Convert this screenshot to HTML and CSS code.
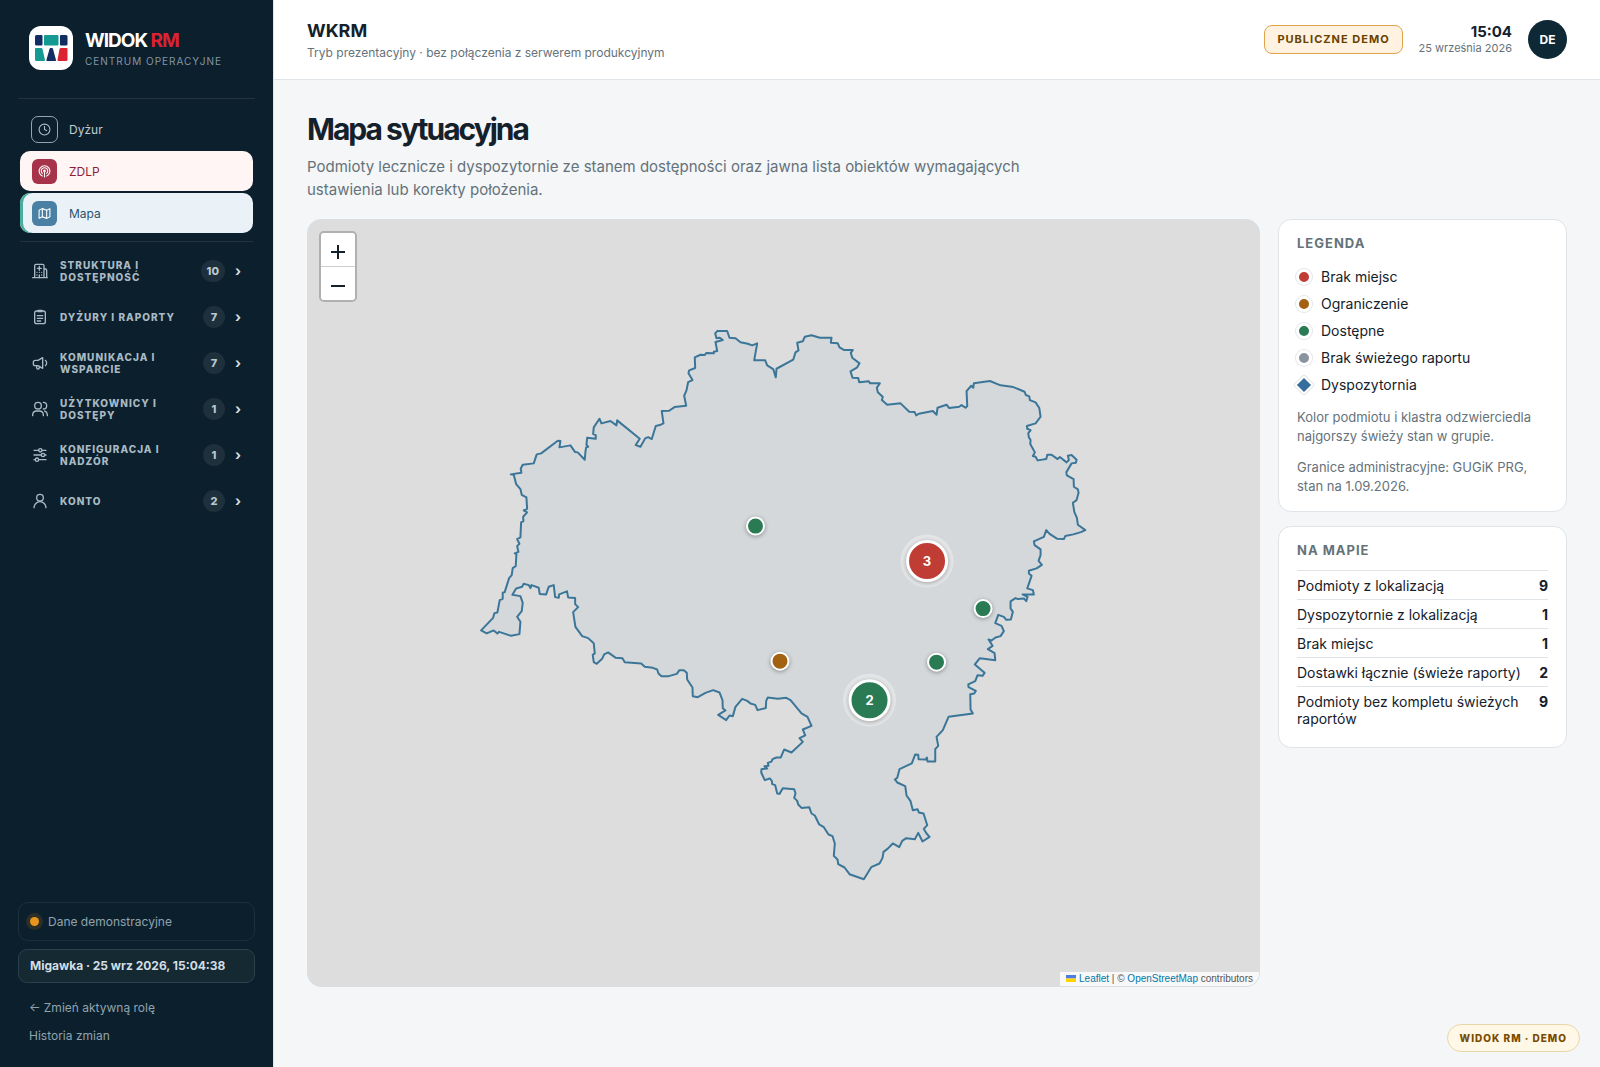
FILE: index.html
```html
<!DOCTYPE html>
<html lang="pl">
<head>
<meta charset="utf-8">
<meta name="viewport" content="width=device-width, initial-scale=1">
<title>Widok RM – Mapa sytuacyjna</title>
<link rel="stylesheet" href="styles.css">
</head>
<body>
<div class="app">
  <aside class="sidebar">
    <div class="brand">
      <svg class="brand-logo" viewBox="0 0 44 44" aria-hidden="true">
        <rect width="44" height="44" rx="12" fill="#fff"/>
        <path d="M7.500 9h5a1 1 0 0 1 1 1v8.500a1 1 0 0 1-1 1h-5a1.500 1.500 0 0 1-1.500-1.500v-7.500a1.500 1.500 0 0 1 1.500-1.500z" fill="#122d63"/>
        <rect x="15" y="9" width="14.500" height="10.500" rx="1" fill="#159a93"/>
        <path d="M32 9h5a1.500 1.500 0 0 1 1.500 1.500v7.500a1.500 1.500 0 0 1-1.500 1.500h-5a1 1 0 0 1-1-1v-8.500a1 1 0 0 1 1-1z" fill="#122d63"/>
        <path d="M7 22h5a1.500 1.500 0 0 1 1.500 1l2.500 11a1 1 0 0 1-1 1h-7.500a1.500 1.500 0 0 1-1.500-1.500v-10.500a1 1 0 0 1 1-1z" fill="#159a93"/>
        <path d="M21.500 22h1.500q.7 0 1 1l3 11q.2 1-.8 1h-8q-1 0-.8-1l3.100-11q.3-1 1-1z" fill="#122d63"/>
        <path d="M32 22h5.500a1 1 0 0 1 1 1v10.500a1.500 1.500 0 0 1-1.500 1.500h-7.500a1 1 0 0 1-1-1l2-11a1.500 1.500 0 0 1 1.500-1z" fill="#dc2231"/>
      </svg>
      <div>
        <div class="brand-name">WIDOK <span>RM</span></div>
        <div class="brand-sub">CENTRUM OPERACYJNE</div>
      </div>
    </div>

    <nav class="nav" aria-label="Główne">
      <a class="nav-link" href="#dyzur">
        <span class="nav-icon outlined"><svg viewBox="0 0 24 24"><circle cx="12" cy="12" r="10"/><path d="M12 6v6l4 2"/></svg></span>Dyżur
      </a>
      <a class="nav-link red" href="#zdlp">
        <span class="nav-icon"><svg viewBox="0 0 24 24"><path d="M16 20.500a10 10 0 1 0-8 0"/><path d="M8 15.500a6 6 0 1 1 8 0"/><circle cx="12" cy="11" r="1.500"/><path d="M12 14v8"/></svg></span>ZDLP
      </a>
      <a class="nav-link blue" href="#mapa" aria-current="page">
        <span class="nav-icon"><svg viewBox="0 0 24 24"><path d="M2 6l6-3 8 3 6-3v15l-6 3-8-3-6 3z"/><path d="M8 3v15M16 6v15"/></svg></span>Mapa
      </a>
    </nav>

    <div class="groups">
      <button class="group" type="button" aria-expanded="false">
        <svg class="group-icon" viewBox="0 0 24 24"><path d="M1 22h22M4 22V4a2 2 0 0 1 2-2h10a2 2 0 0 1 2 2v18M18 9h2a2 2 0 0 1 2 2v11M11 5v6M8 8h6"/><path d="M7.500 14h.01M11 14h.01M14.500 14h.01M7.500 18h.01M14.500 18h.01M11 18v4"/></svg>
        <span class="group-label">STRUKTURA I DOSTĘPNOŚĆ</span><span class="count">10</span><span class="chevron">›</span>
      </button>
      <button class="group" type="button" aria-expanded="false">
        <svg class="group-icon" viewBox="0 0 24 24"><rect x="4" y="3" width="16" height="19" rx="3"/><path d="M9 2h6v2H9zM8 10h8M8 14h8M8 18h5"/></svg>
        <span class="group-label">DYŻURY I RAPORTY</span><span class="count">7</span><span class="chevron">›</span>
      </button>
      <button class="group" type="button" aria-expanded="false">
        <svg class="group-icon" viewBox="0 0 24 24"><path d="M16 4v16L9 16H5a3 3 0 0 1-3-3v-2a3 3 0 0 1 3-3h4zM7 16v3a2 2 0 0 0 4 0v-2M20 8a5 5 0 0 1 0 8"/></svg>
        <span class="group-label">KOMUNIKACJA I WSPARCIE</span><span class="count">7</span><span class="chevron">›</span>
      </button>
      <button class="group" type="button" aria-expanded="false">
        <svg class="group-icon" viewBox="0 0 24 24"><circle cx="9" cy="7" r="5"/><path d="M1 22v-2a6 6 0 0 1 6-5h4a6 6 0 0 1 6 5v2M17 2a5 5 0 0 1 0 10M19 15a6 6 0 0 1 4 5v2"/></svg>
        <span class="group-label">UŻYTKOWNICY I DOSTĘPY</span><span class="count">1</span><span class="chevron">›</span>
      </button>
      <button class="group" type="button" aria-expanded="false">
        <svg class="group-icon" viewBox="0 0 24 24"><path d="M3 5h7M15 5h6M3 12h11M19 12h2M3 19h2M10 19h11"/><circle cx="12.500" cy="5" r="2.500"/><circle cx="16.500" cy="12" r="2.500"/><circle cx="7.500" cy="19" r="2.500"/></svg>
        <span class="group-label">KONFIGURACJA I NADZÓR</span><span class="count">1</span><span class="chevron">›</span>
      </button>
      <button class="group" type="button" aria-expanded="false">
        <svg class="group-icon" viewBox="0 0 24 24"><circle cx="12" cy="7" r="5"/><path d="M3 22a9 9 0 0 1 18 0"/></svg>
        <span class="group-label">KONTO</span><span class="count">2</span><span class="chevron">›</span>
      </button>
    </div>

    <div class="side-foot">
      <div class="data-state"><i></i>Dane demonstracyjne</div>
      <div class="snapshot">Migawka · 25 wrz 2026, 15:04:38</div>
      <a href="#rola">← Zmień aktywną rolę</a>
      <a href="#historia">Historia zmian</a>
    </div>
  </aside>

  <div class="main">
    <header class="topbar">
      <div>
        <div class="org">WKRM</div>
        <div class="org-sub">Tryb prezentacyjny · bez połączenia z serwerem produkcyjnym</div>
      </div>
      <div class="topbar-right">
        <span class="demo-badge">PUBLICZNE DEMO</span>
        <div class="clock">
          <div class="clock-time">15:04</div>
          <div class="clock-date">25 września 2026</div>
        </div>
        <span class="avatar">DE</span>
      </div>
    </header>

    <main class="content">
      <h1>Mapa sytuacyjna</h1>
      <p class="lead">Podmioty lecznicze i dyspozytornie ze stanem dostępności oraz jawna lista obiektów wymagających ustawienia lub korekty położenia.</p>

      <div class="layout">
        <section class="map" aria-label="Mapa">
          <svg class="map-canvas" viewBox="307 220 952 766" preserveAspectRatio="xMidYMid slice">
            <path class="border" d="M480.700 630.300 492.700 617.700 494 613 497 612.300 499.300 600 502.300 598.700 502.300 592.700 504.300 592 508.700 578 511.300 575 512.300 568 515.300 566 516 554 514.300 553.300 518 551.700 516.700 546 519 543.700 516.700 539 520 537.300 520.700 522.300 523 521 522.700 516.700 526.700 512.300 523.300 510.300 526.700 508.700 526 497.300 521.300 494.700 520 489 515.700 484 513.300 474.700 510.300 474.300 521 472.700 520.300 468.700 522.300 464.700 533.300 463.300 536.300 454.300 540.700 453.300 557.300 440.700 560 441 559 447.300 570 445.300 574.700 452 577.300 452.300 584.300 459.700 585 451.700 585.700 447.300 587.700 446.700 586 444.700 586.700 437.700 595.300 438.700 595.300 435 592.700 434 593.300 427.300 599 418.700 601 423.300 610 421 616 425.300 616.700 420.300 639.300 438.700 635.300 445 640 446.700 644.700 438.300 647.700 437 651.300 439 655.300 426 659.300 425 663 423.300 661.300 411 668.700 410.700 674 407 685.700 405.700 683.700 395.700 686 390.300 687.700 382 692 380 688 373.300 688.700 370.300 694.700 368 694.300 357.300 700 354.700 704.300 355 705.700 353 713.300 353.300 713.300 351.700 716.700 351 715 342 722.300 340 719.300 337.700 716 338.300 714.700 333.300 716.700 331 726.700 331 729 337.700 735 338.300 740 342.300 747.300 343.700 751.700 345.300 756.700 343.300 753.700 360.300 764.700 360.300 766.700 365.300 772.700 369 775.300 377.300 776 368.700 792.700 359.700 795 352.300 798 350.300 796.700 342.700 802.300 341.300 804.300 336.700 811 335.300 819.300 337.700 831 337.700 830.300 342.700 837.300 343.300 839 347.300 843.700 350 852.300 350 850.300 352.700 851.700 357.700 859 363.300 856.700 367.300 850 371.300 852 377.700 857.700 378 858.700 382.300 868.300 381.300 869.700 383.300 879.300 383.300 876.300 387.700 877.300 392.300 882.300 397 881.300 400 886.700 404.700 900 403.300 908.700 411.700 914 412 915.700 415.300 918.300 413.700 932.300 411 936 414.700 937 407.700 946 404.700 948.700 408 958.700 406.700 961 405 965 407.700 966.700 406 966 391 970.700 385.700 972.700 387.700 973.300 383.300 989.300 381 1000 385.300 1012.700 387 1024 391.700 1025.300 395 1028.700 396.300 1029.300 400 1035 402.300 1038.700 408 1040 416.700 1035 423.300 1026.300 426 1026.700 428.700 1030 430 1027.700 433.300 1028.300 437.300 1030 440 1029.700 444 1034.300 452.300 1032.300 456 1035 456.700 1037 460.300 1045.700 459 1046.700 454.700 1051 454.700 1057 459 1059.300 457 1066 462.300 1068.300 460 1067.300 455.700 1071 455 1076 459.700 1075.300 462.700 1071 463.300 1065.700 472.300 1066.300 475.300 1073 479 1073.300 486.700 1077.300 489.300 1078 492.700 1076 500 1072.300 502.700 1073.700 511.700 1076.300 517.700 1077.300 524.700 1084.700 530 1080.300 532 1072.700 534.300 1064.700 536 1063.300 539 1056.700 538.700 1049 533.700 1045.700 530 1043.300 536.700 1033.300 541.300 1034 545 1040 549.300 1040 555 1038 560.700 1041.300 564.700 1036 568.300 1028.300 570.700 1028.300 573.300 1031 575.700 1026.700 588.300 1032.300 590 1033.300 594.300 1022 594.300 1027 596.700 1025.700 601 1023.300 598.300 1017.300 599 1015 598 1010 601.300 1010 608.300 1012.300 611.700 1010.300 619.300 1005.700 619.700 1003.300 616.700 997.700 614.700 994.700 623 1001 625.700 1003.300 631 1000 636 995 637.300 991 640.300 988 639.300 992 645.700 987.300 649 994 653 994.700 660 979.300 658 974.300 664.300 984 672.700 982 675.700 977 675 974.700 681 967.700 684.300 968 687 975.300 690.700 973.700 693.300 969.700 694 970 709.300 972.300 713.300 948 716.700 942.300 730 936 736.700 937.700 745.700 934.700 749 934.700 761.300 927 761.300 926.300 757.300 925.300 759.300 918 759 917.700 754.700 914.700 754.300 911.300 763.300 899 769 896.700 777.700 894.300 779.300 896.700 782.300 904.700 786 906 795.300 910 801 912.300 810 917 809 918.300 812.300 923 813.300 926.700 825 923.300 828.700 926 833.300 929 836.700 922 841.300 917.700 832.700 914.300 839 905.700 838 901.700 840.700 898.700 847 892.300 843.300 887 848.700 883 851.700 882 857.700 879 863.300 870.700 867 863.300 879 849 874 844 867.300 837.700 864 837 859.300 833.300 855.700 834.300 843.300 832 836 828 834.300 823.300 827 818.700 824.300 814.300 815.300 811 813.300 808.700 807 801 807.700 797.700 804.300 796.700 800.700 793.700 797.700 795 793.300 793.700 789 782.300 788 779 793.700 776.700 793.300 774.700 785 771.700 784 771.300 780.700 769.300 778.300 764.300 780 760.700 772.300 761 769 766.700 768.300 764 766 768 765.500 767.300 762.700 771 761.500 772 759 776 757.300 780.300 757.300 783.700 749.300 791 752.300 802.300 741.700 799 738 804.700 735.300 802.300 729.300 811 725.700 807 716.700 801 713.300 790 700 785.700 697.700 777.300 698.700 767.300 697.300 765.700 700.700 765.300 708 757 710 754.700 704.700 750 703.300 746.700 700.700 741.700 698.700 735 706.700 732.300 716 729 715.300 725.700 720 717.700 714.700 725 710.300 722.300 708 722 700 719 692.300 712.700 690 705 692.700 697.300 697 692.300 696 692 687.300 686.700 679.300 686.300 672.700 683.300 670 679 670 676.300 673.700 668.300 676 661 676 658 673.300 656.700 669.300 652.300 667.700 644.300 666.700 640.700 663.300 624.300 662 622 658 615.300 657.700 607.700 652.300 603.700 654.300 601.700 658.700 596.300 663.700 593.300 662 592.300 654.700 594.300 653.300 593.300 643 587.700 638 581.700 636 575 626.700 572.700 612 577.700 607 574.700 604 574.700 598 567.700 597.300 566.500 591.200 558.700 594.300 558.300 597.700 554.700 597 553.300 585 548.300 586.700 545.700 594.300 539.300 594 538.300 587.700 531 585 530 588 528.300 585 523.300 583.700 521.700 586.700 515.700 588.300 512 594.700 520 596 522.300 602.700 521.300 611 516.700 616.700 520 621.700 519 634 510.700 635.700 498.700 631.700 497 633.300 493.300 630.300 486.300 633.300Z"/>
            <g class="pin">
              <circle cx="755" cy="526" r="8.500" fill="#2a7a53"/>
              <circle cx="982.500" cy="608.500" r="8.500" fill="#2a7a53"/>
              <circle cx="936" cy="662" r="8.500" fill="#2a7a53"/>
              <circle cx="779.500" cy="661" r="8.500" fill="#a26212"/>
            </g>
            <g class="cluster">
              <circle class="halo" cx="926.500" cy="561" r="26.500"/>
              <circle class="disc" cx="926.500" cy="561" r="19.500" fill="#bf3d35"/>
              <text x="926.500" y="566">3</text>
              <circle class="halo" cx="869" cy="700" r="26.500"/>
              <circle class="disc" cx="869" cy="700" r="19.500" fill="#2a7a53"/>
              <text x="869" y="705">2</text>
            </g>
          </svg>
          <div class="zoom">
            <button type="button" aria-label="Przybliż"><svg viewBox="0 0 14 14"><path d="M7 0v14M0 7h14"/></svg></button>
            <button type="button" aria-label="Oddal"><svg viewBox="0 0 14 14"><path d="M0 7h14"/></svg></button>
          </div>
          <div class="credits"><svg class="flag" viewBox="0 0 12 8" preserveAspectRatio="none" aria-hidden="true"><path fill="#4c7be1" d="M0 0h12v4H0z"/><path fill="#ffd500" d="M0 4h12v4H0z"/></svg> <a href="#leaflet">Leaflet</a> | © <a href="#osm">OpenStreetMap</a> contributors</div>
        </section>

        <div class="panels">
          <section class="card">
            <h2>LEGENDA</h2>
            <ul class="legend">
              <li><i class="dot red"></i>Brak miejsc</li>
              <li><i class="dot amber"></i>Ograniczenie</li>
              <li><i class="dot green"></i>Dostępne</li>
              <li><i class="dot gray"></i>Brak świeżego raportu</li>
              <li><i class="dot diamond"></i>Dyspozytornia</li>
            </ul>
            <p class="note">Kolor podmiotu i klastra odzwierciedla najgorszy świeży stan w grupie.</p>
            <p class="note">Granice administracyjne: GUGiK PRG, stan na 1.09.2026.</p>
          </section>
          <section class="card">
            <h2>NA MAPIE</h2>
            <dl class="stats">
              <div><dt>Podmioty z lokalizacją</dt><dd>9</dd></div>
              <div><dt>Dyspozytornie z lokalizacją</dt><dd>1</dd></div>
              <div><dt>Brak miejsc</dt><dd>1</dd></div>
              <div><dt>Dostawki łącznie (świeże raporty)</dt><dd>2</dd></div>
              <div><dt>Podmioty bez kompletu świeżych raportów</dt><dd>9</dd></div>
            </dl>
          </section>
        </div>
      </div>
    </main>
  </div>
</div>
<div class="demo-pill">WIDOK RM · DEMO</div>
</body>
</html>
```
FILE: styles.css
```css
* { box-sizing: border-box; }

body {
  margin: 0;
  background: #f4f6f8;
  color: #14212b;
  font-family: Inter, "Liberation Sans", sans-serif;
  font-size: 14px;
}

a { color: inherit; text-decoration: none; }
button { font: inherit; cursor: pointer; }
h1, h2, p, ul, dl, dd { margin: 0; padding: 0; }
ul { list-style: none; }

.app {
  display: grid;
  grid-template-columns: 273px minmax(0, 1fr);
  min-height: 100vh;
}

/* Sidebar */
.sidebar {
  display: flex;
  flex-direction: column;
  height: 100vh;
  position: sticky;
  top: 0;
  padding: 0 18px 17px;
  background: #0c1f2c;
  color: #a9bac4;
}

.brand {
  display: flex;
  align-items: center;
  gap: 12px;
  height: 99px;
  padding: 0 11px 2px;
  border-bottom: 1px solid #20333f;
}
.brand-logo { width: 44px; height: 44px; }
.brand-name {
  color: #fff;
  font-size: 19px;
  font-weight: 700;
  line-height: 24px;
  letter-spacing: -1px;
}
.brand-name span { color: #dc2231; }
.brand-sub {
  margin-top: 2px;
  font-size: 10px;
  line-height: 13px;
  letter-spacing: 1px;
  color: #8296a3;
}

.nav {
  display: flex;
  flex-direction: column;
  gap: 2px;
  margin: 0 2px;
  padding: 10px 0 8px;
  border-bottom: 1px solid #20333f;
}
.nav-link {
  display: flex;
  align-items: center;
  gap: 12px;
  height: 40px;
  padding-left: 12px;
  border-radius: 10px;
  font-size: 12px;
  color: #c0ccd3;
}
.nav-icon {
  display: flex;
  align-items: center;
  justify-content: center;
  width: 25px;
  height: 25px;
  border-radius: 6px;
  color: #fff;
}
.nav-icon svg {
  width: 13px;
  height: 13px;
  fill: none;
  stroke: currentColor;
  stroke-width: 2;
  stroke-linecap: round;
  stroke-linejoin: round;
}
.nav-icon.outlined {
  width: 27px;
  height: 27px;
  margin: 0 -1px;
  border: 1px solid #93a4af;
  border-radius: 7px;
  color: #a9bac4;
}
.nav-link.red { background: #fff5f5; color: #8c1e3b; }
.nav-link.red .nav-icon { background: #a6334a; }
.nav-link.blue {
  background: #eaf2f8;
  color: #2a526f;
  box-shadow: inset 3px 0 #4aada0;
}
.nav-link.blue .nav-icon { background: #4a80a4; }

.groups {
  display: flex;
  flex-direction: column;
  gap: 2px;
  margin: 7px 2px 0;
}
.group {
  display: flex;
  align-items: center;
  gap: 12px;
  height: 44px;
  padding: 0 10px 0 12px;
  border: 0;
  background: none;
  color: #a9bac4;
  text-align: left;
}
.group-icon {
  width: 16px;
  height: 16px;
  flex: none;
  fill: none;
  stroke: currentColor;
  stroke-width: 2;
  stroke-linecap: round;
  stroke-linejoin: round;
}
.group-label {
  flex: 1;
  font-size: 10px;
  font-weight: 800;
  line-height: 12px;
  letter-spacing: 1px;
}
.count {
  min-width: 22px;
  padding: 0 6px;
  border-radius: 11px;
  background: #1d303c;
  color: #b9c7cf;
  font-size: 11px;
  font-weight: 800;
  line-height: 22px;
  text-align: center;
}
.chevron {
  width: 8px;
  margin-left: -2px;
  font-size: 14px;
  font-weight: 700;
  line-height: 20px;
  color: #d5dee3;
}

.side-foot {
  display: flex;
  flex-direction: column;
  margin-top: auto;
  font-size: 12px;
  color: #8fa3af;
}
.side-foot a { padding: 0 11px; line-height: 28px; }
.data-state {
  display: flex;
  align-items: center;
  gap: 9px;
  height: 39px;
  padding: 0 11px;
  border: 1px solid #1c303c;
  border-radius: 10px;
}
.data-state i {
  width: 9px;
  height: 9px;
  border-radius: 50%;
  background: #e8951b;
  box-shadow: 0 0 0 4px #2b2f28;
}
.snapshot {
  height: 34px;
  margin: 8px 0 11px;
  padding: 0 11px;
  border: 1px solid #2c404c;
  border-radius: 9px;
  background: #152933;
  color: #d3dee4;
  font-size: 12px;
  font-weight: 700;
  line-height: 32px;
}

/* Top bar */
.main { border-left: 1px solid #dfe4e8; }
.topbar {
  display: flex;
  align-items: center;
  justify-content: space-between;
  height: 80px;
  padding: 0 33px;
  border-bottom: 1px solid #dfe4e8;
  background: #fff;
}
.org { font-size: 18px; font-weight: 700; line-height: 24px; }
.org-sub { margin-top: 2px; font-size: 12px; line-height: 16px; color: #65727a; }
.topbar-right { display: flex; align-items: center; gap: 16px; }
.demo-badge {
  padding: 0 12px;
  border: 1px solid #e0a34a;
  border-radius: 8px;
  background: #fff2e0;
  color: #694200;
  font-size: 11px;
  font-weight: 700;
  line-height: 27px;
  letter-spacing: 1px;
}
.clock { text-align: right; }
.clock-time { font-size: 15px; font-weight: 700; line-height: 18px; }
.clock-date { font-size: 11px; line-height: 15px; color: #65727a; }
.avatar {
  width: 39px;
  height: 39px;
  border-radius: 50%;
  background: #0f2836;
  color: #fff;
  font-size: 12px;
  font-weight: 700;
  line-height: 39px;
  text-align: center;
}

/* Content */
.content { padding: 30px 33px; }
h1 {
  font-size: 30px;
  font-weight: 700;
  line-height: 38px;
  letter-spacing: -2px;
}
.lead {
  max-width: 740px;
  margin: 7px 0 18px;
  font-size: 15px;
  line-height: 23px;
  color: #65727a;
}
.layout {
  display: grid;
  grid-template-columns: minmax(0, 1fr) 289px;
  gap: 18px;
  align-items: start;
}

.map {
  position: relative;
  height: 72vh;
  overflow: hidden;
  border: 1px solid #d8dfe3;
  border-radius: 14px;
  background: #ddd;
}
.map-canvas { display: block; width: 100%; height: 100%; }
.border {
  fill: #4a86b8;
  fill-opacity: 0.06;
  stroke: #3b7699;
  stroke-width: 2;
  stroke-linejoin: round;
}
.pin circle {
  stroke: #fff;
  stroke-width: 2;
  filter: drop-shadow(0 1px 2px rgba(0, 0, 0, 0.35));
}
.halo { fill: #fff; fill-opacity: 0.35; }
.disc {
  stroke: #fff;
  stroke-width: 3;
  filter: drop-shadow(0 1px 2px rgba(0, 0, 0, 0.3));
}
.cluster text {
  fill: #fff;
  font-size: 13px;
  font-weight: 700;
  text-anchor: middle;
}
.zoom {
  position: absolute;
  top: 11px;
  left: 11px;
  display: flex;
  flex-direction: column;
  border: 2px solid #b0b0b0;
  border-radius: 5px;
  overflow: hidden;
}
.zoom button {
  display: flex;
  align-items: center;
  justify-content: center;
  width: 34px;
  height: 33px;
  padding: 5px 0 0;
  border: 0;
  background: #fff;
}
.zoom button + button { height: 34px; border-top: 1px solid #ccc; }
.zoom svg { width: 14px; height: 14px; stroke: #14212b; stroke-width: 2; }
.credits {
  position: absolute;
  right: 0;
  bottom: 0;
  padding: 0 6px;
  background: rgba(255, 255, 255, 0.8);
  color: #555;
  font-family: "Liberation Sans", sans-serif;
  font-size: 10px;
  line-height: 14px;
}
.credits a { color: #0078a8; }
.flag { width: 10px; height: 7px; }

.panels { display: grid; gap: 14px; }
.card {
  padding: 15px 18px;
  border: 1px solid #dfe4e8;
  border-radius: 13px;
  background: #fff;
}
h2 {
  font-size: 13px;
  font-weight: 700;
  line-height: 17px;
  letter-spacing: 1px;
  color: #65727a;
}
.legend { display: grid; gap: 9px; margin: 16px 0 14px; }
.legend li {
  display: flex;
  align-items: center;
  gap: 9px;
  font-size: 14px;
  line-height: 18px;
}
.dot {
  width: 16px;
  height: 16px;
  margin-left: -1px;
  border: 3px solid #fff;
  border-radius: 50%;
  background: var(--dot);
  box-shadow: 0 0 0 1px #e3e7ea;
}
.red { --dot: #bf3d35; }
.amber { --dot: #a26212; }
.green { --dot: #2a7a53; }
.gray { --dot: #8a94a0; }
.diamond {
  --dot: #356d9c;
  width: 14px;
  height: 14px;
  margin: 0 1px 0 0;
  border-width: 2px;
  border-radius: 2px;
  transform: rotate(45deg);
}
.note { font-size: 13px; line-height: 19px; color: #65727a; }
.note + .note { margin-top: 12px; }
.stats { margin-top: 11px; }
.stats div {
  display: flex;
  justify-content: space-between;
  gap: 12px;
  padding: 6px 0 5px;
  border-top: 1px solid #dfe4e8;
  font-size: 14px;
  line-height: 17px;
}
.stats dd { font-weight: 700; }

.demo-pill {
  position: fixed;
  right: 20px;
  bottom: 15px;
  padding: 0 12px;
  border: 1px solid #e8d5a8;
  border-radius: 14px;
  background: #fff8e6;
  color: #7a4a00;
  font-size: 10px;
  font-weight: 800;
  line-height: 26px;
  letter-spacing: 1px;
}
```
